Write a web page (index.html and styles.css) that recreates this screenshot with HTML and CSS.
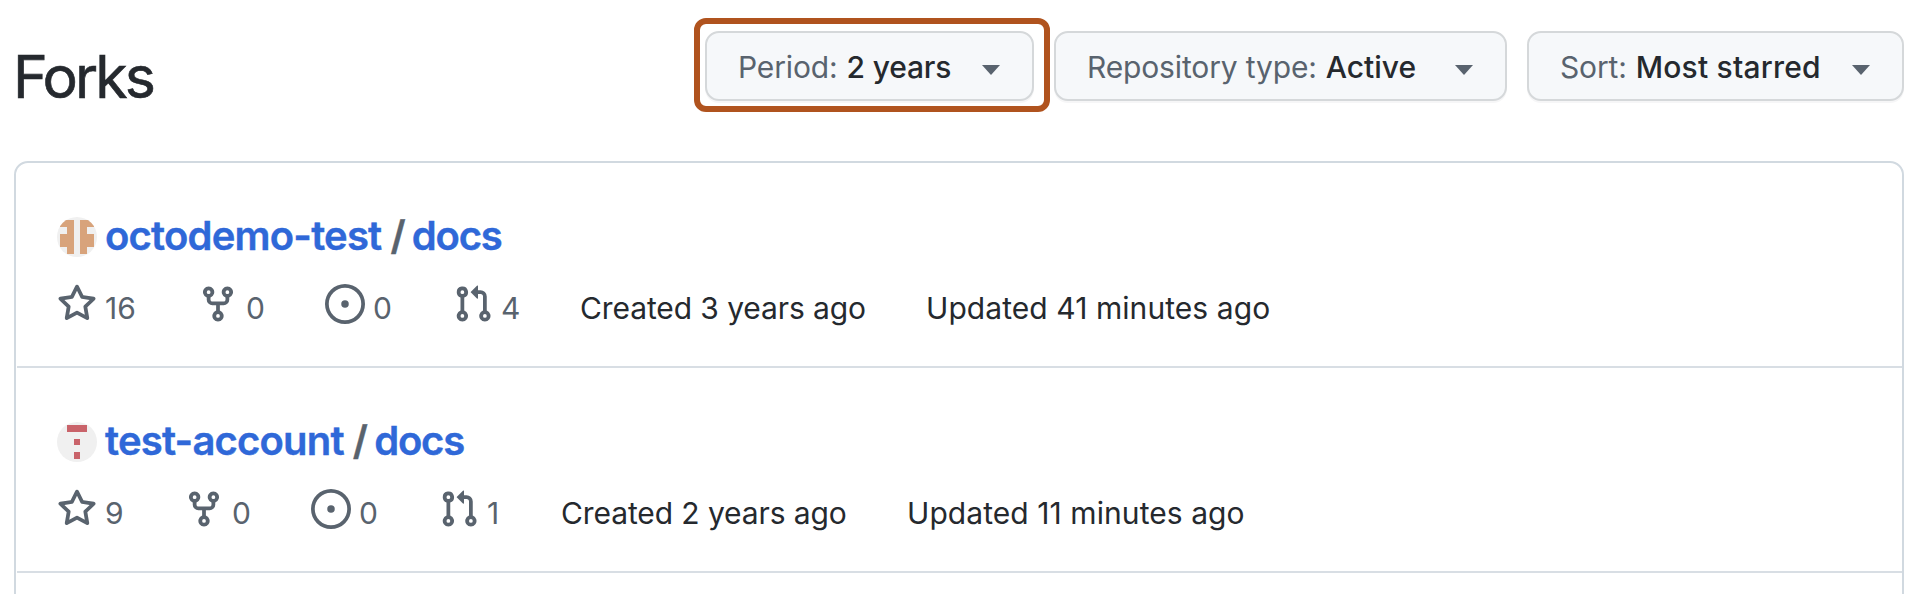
FILE: index.html
```html
<!DOCTYPE html>
<html lang="en">
<head>
<meta charset="utf-8">
<title>Forks</title>
<link rel="stylesheet" href="styles.css">
</head>
<body>
<svg class="sprite" aria-hidden="true">
  <symbol id="star" viewBox="0 0 16 16"><path d="M8 .25a.75.75 0 0 1 .673.418l1.882 3.815 4.21.612a.75.75 0 0 1 .416 1.279l-3.046 2.97.719 4.192a.751.751 0 0 1-1.088.791L8 12.347l-3.766 1.98a.75.75 0 0 1-1.088-.79l.72-4.194L.818 6.374a.75.75 0 0 1 .416-1.28l4.21-.611L7.327.668A.75.75 0 0 1 8 .25Zm0 2.445L6.615 5.5a.75.75 0 0 1-.564.41l-3.097.45 2.24 2.184a.75.75 0 0 1 .216.664l-.528 3.084 2.769-1.456a.75.75 0 0 1 .698 0l2.77 1.456-.53-3.084a.75.75 0 0 1 .216-.664l2.24-2.183-3.096-.45a.75.75 0 0 1-.564-.41L8 2.694Z"/></symbol>
  <symbol id="fork" viewBox="0 0 16 16"><path d="M5 5.372v.878c0 .414.336.75.75.75h4.5a.75.75 0 0 0 .75-.75v-.878a2.25 2.25 0 1 1 1.5 0v.878a2.25 2.25 0 0 1-2.25 2.25h-1.5v2.128a2.251 2.251 0 1 1-1.5 0V8.5h-1.5A2.25 2.25 0 0 1 3.5 6.25v-.878a2.25 2.25 0 1 1 1.5 0ZM5 3.25a.75.75 0 1 0-1.5 0 .75.75 0 0 0 1.5 0Zm6.75.75a.75.75 0 1 0 0-1.5.75.75 0 0 0 0 1.5Zm-3 8.75a.75.75 0 1 0-1.5 0 .75.75 0 0 0 1.5 0Z"/></symbol>
  <symbol id="issue" viewBox="0 0 16 16"><path d="M8 9.5a1.5 1.5 0 1 0 0-3 1.5 1.5 0 0 0 0 3Z"/><path d="M8 0a8 8 0 1 1 0 16A8 8 0 0 1 8 0ZM1.5 8a6.5 6.5 0 1 0 13 0 6.5 6.5 0 0 0-13 0Z"/></symbol>
  <symbol id="pull" viewBox="0 0 16 16"><path d="M1.5 3.25a2.25 2.25 0 1 1 3 2.122v5.256a2.251 2.251 0 1 1-1.5 0V5.372A2.25 2.25 0 0 1 1.5 3.25Zm5.677-.177L9.573.677A.25.25 0 0 1 10 .854V2.5h1A2.5 2.5 0 0 1 13.5 5v5.628a2.251 2.251 0 1 1-1.5 0V5a1 1 0 0 0-1-1h-1v1.646a.25.25 0 0 1-.427.177L7.177 3.427a.25.25 0 0 1 0-.354ZM3.75 2.5a.75.75 0 1 0 0 1.5.75.75 0 0 0 0-1.5Zm0 9.5a.75.75 0 1 0 0 1.5.75.75 0 0 0 0-1.5Zm8.25.75a.75.75 0 1 0 1.5 0 .75.75 0 0 0-1.5 0Z"/></symbol>
  <symbol id="caret" viewBox="0 0 18 10"><path d="M0 0H18L9 10Z"/></symbol>
</svg>
<header class="top">
  <h1 class="heading">Forks</h1>
  <div class="filters">
    <div class="highlight"><button class="filter period"><span class="label">Period:</span><b class="value">2 years</b><svg class="caret"><use href="#caret"/></svg></button></div>
    <button class="filter type"><span class="label">Repository type:</span><b class="value">Active</b><svg class="caret"><use href="#caret"/></svg></button>
    <button class="filter sort"><span class="label">Sort:</span><b class="value">Most starred</b><svg class="caret"><use href="#caret"/></svg></button>
  </div>
</header>
<main class="list">
  <article class="repo first">
    <h2 class="name">
      <svg class="avatar" viewBox="0 0 40 40"><path fill="#d8a37b" d="M3 3H17V37H10V30H3V17H10V10H3ZM23 3H37V10H30V17H37V30H30V37H23Z"/></svg>
      <a class="owner">octodemo-test</a><span class="slash">/</span><a class="docs">docs</a>
    </h2>
    <div class="stats">
      <span class="stat stars"><svg class="icon"><use href="#star"/></svg>16</span>
      <span class="stat forks"><svg class="icon"><use href="#fork"/></svg>0</span>
      <span class="stat issues"><svg class="icon"><use href="#issue"/></svg>0</span>
      <span class="stat pulls"><svg class="icon"><use href="#pull"/></svg>4</span>
      <span class="created">Created 3 years ago</span>
      <span class="updated">Updated 41 minutes ago</span>
    </div>
  </article>
  <article class="repo second">
    <h2 class="name">
      <svg class="avatar" viewBox="0 0 40 40"><path fill="#c9636a" d="M10 3H30V10H10ZM17 17H23V23H17ZM17 30H23V37H17Z"/></svg>
      <a class="owner">test-account</a><span class="slash">/</span><a class="docs">docs</a>
    </h2>
    <div class="stats">
      <span class="stat stars"><svg class="icon"><use href="#star"/></svg>9</span>
      <span class="stat forks"><svg class="icon"><use href="#fork"/></svg>0</span>
      <span class="stat issues"><svg class="icon"><use href="#issue"/></svg>0</span>
      <span class="stat pulls"><svg class="icon"><use href="#pull"/></svg>1</span>
      <span class="created">Created 2 years ago</span>
      <span class="updated">Updated 11 minutes ago</span>
    </div>
  </article>
</main>
</body>
</html>
```
FILE: styles.css
```css
* { box-sizing: border-box; }
body {
  margin: 0;
  height: 594px;
  overflow: hidden;
  background: #fff;
  color: #25292e;
  font-family: Inter, "Liberation Sans", sans-serif;
  font-size: 30px;
}
.sprite { position: absolute; width: 0; height: 0; }
svg { flex: none; fill: #59636e; }

.top {
  display: flex;
  justify-content: space-between;
  height: 161px;
  padding: 18px 26px 0 14px;
}
.heading {
  margin: 24px 0 0 -1px;
  font-size: 59px;
  font-weight: 400;
  line-height: 70px;
  letter-spacing: -2.9px;
  -webkit-text-stroke: .6px #25292e;
}
.filters { display: flex; align-items: flex-start; }
.highlight {
  width: 356px;
  height: 94px;
  padding: 7px 5px;
  margin-right: 4px;
  border: 6px solid #b0531e;
  border-radius: 12px;
}
.filter {
  display: flex;
  align-items: center;
  height: 70px;
  padding: 1px 32px 0 31px;
  border: 2px solid #d5d8da;
  border-radius: 14px;
  background: #f6f8fa;
  box-shadow: 0 2px 0 rgba(31, 35, 40, .04);
  font: 400 30px/36px Inter, "Liberation Sans", sans-serif;
  color: #25292e;
  white-space: nowrap;
}
.period { width: 329px; }
.type { width: 453px; margin-top: 13px; }
.sort { width: 377px; margin: 13px 0 0 20px; }
.label { color: #59636e; margin-right: 9px; letter-spacing: -.15px; }
.value { font-weight: 500; letter-spacing: -.15px; }
.type .value { letter-spacing: 0; }
.sort .value { letter-spacing: .2px; }
.caret { width: 18px; height: 10px; margin: 7px 0 0 auto; }

.list {
  width: 1890px;
  height: 460px;
  margin-left: 14px;
  border: 2px solid #d1d9e0;
  border-radius: 14px;
}
.repo {
  height: 205px;
  margin-left: 1px;
  padding: 48px 0 0 40px;
  border-bottom: 2px solid #d8dee4;
}
.name {
  display: flex;
  align-items: center;
  height: 50px;
  margin: 0;
  font-size: 40px;
  font-weight: 600;
  line-height: 50px;
  letter-spacing: -.8px;
  color: #2f68d8;
  white-space: nowrap;
  -webkit-text-stroke: .4px currentColor;
}
.avatar { width: 40px; height: 40px; margin: 2px 8px 0 0; border-radius: 50%; background: #f0f0f0; }
.slash { color: #59636e; margin: 0 7px 0 9px; }
.docs { letter-spacing: -1.2px; }
.stats { display: flex; margin-top: 23px; height: 40px; line-height: 48px; white-space: nowrap; }
.stat { display: flex; gap: 8px; width: 127px; color: #59636e; }
.icon { width: 40px; height: 40px; }
.first .stars { width: 141px; }
.issues { width: 128px; }
.second .pulls { width: 122px; }
.created { width: 346px; letter-spacing: -.1px; }
.updated { letter-spacing: .07px; }
```
